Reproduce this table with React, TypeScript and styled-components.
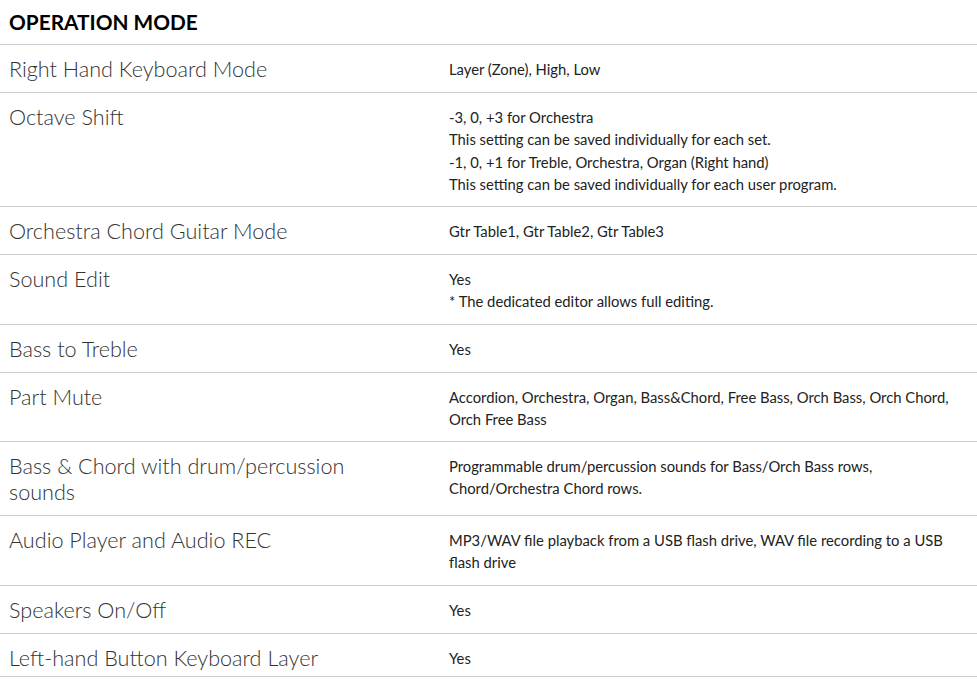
import React from "react";
import styled, { createGlobalStyle } from "styled-components";

const GlobalStyle = createGlobalStyle`
  html, body { margin: 0; padding: 0; background: #fff; }
  body { font-family: "Lato", "Noto Sans", sans-serif; -webkit-font-smoothing: antialiased; }
`;

const Page = styled.div`
  width: 977px;
`;

const Title = styled.h2`
  margin: 0;
  padding: 10px 9px 0 9px;
  height: 44px;
  box-sizing: border-box;
  font-family: "Lato", sans-serif;
  font-weight: 700;
  font-size: 20.8px;
  line-height: 24px;
  color: #000;
`;

const Table = styled.div`
  border-top: 1px solid #cccccc;
`;

const Row = styled.div`
  display: grid;
  grid-template-columns: 440px 1fr;
  border-bottom: 1px solid #cccccc;
  &:last-child > div { padding-bottom: 5px; }
`;

const Label = styled.div`
  padding: 11px 9px 10px 9px;
  font-family: "Lato", sans-serif;
  font-weight: 300;
  font-size: 21.6px;
  line-height: 26px;
  color: #333;
  max-width: 360px;
`;

const Value = styled.div`
  padding: 13px 9px 11px 9px;
  font-family: "Lato", sans-serif;
  font-weight: 400;
  font-size: 14.8px;
  line-height: 22.25px;
  color: #222;
`;

const Line = styled.div``;

const rows: { label: string; value: string[] }[] = [
  { label: "Right Hand Keyboard Mode", value: ["Layer (Zone), High, Low"] },
  {
    label: "Octave Shift",
    value: [
      "-3, 0, +3 for Orchestra",
      "This setting can be saved individually for each set.",
      "-1, 0, +1 for Treble, Orchestra, Organ (Right hand)",
      "This setting can be saved individually for each user program.",
    ],
  },
  { label: "Orchestra Chord Guitar Mode", value: ["Gtr Table1, Gtr Table2, Gtr Table3"] },
  { label: "Sound Edit", value: ["Yes", "* The dedicated editor allows full editing."] },
  { label: "Bass to Treble", value: ["Yes"] },
  {
    label: "Part Mute",
    value: ["Accordion, Orchestra, Organ, Bass&Chord, Free Bass, Orch Bass, Orch Chord, Orch Free Bass"],
  },
  {
    label: "Bass & Chord with drum/percussion sounds",
    value: ["Programmable drum/percussion sounds for Bass/Orch Bass rows,", "Chord/Orchestra Chord rows."],
  },
  {
    label: "Audio Player and Audio REC",
    value: ["MP3/WAV file playback from a USB flash drive, WAV file recording to a USB flash drive"],
  },
  { label: "Speakers On/Off", value: ["Yes"] },
  { label: "Left-hand Button Keyboard Layer", value: ["Yes"] },
];

export default function App() {
  return (
    <Page>
      <GlobalStyle />
      <Title>OPERATION MODE</Title>
      <Table>
        {rows.map((r) => (
          <Row key={r.label}>
            <Label>{r.label}</Label>
            <Value>
              {r.value.map((v, i) => (
                <Line key={i}>{v}</Line>
              ))}
            </Value>
          </Row>
        ))}
      </Table>
    </Page>
  );
}
